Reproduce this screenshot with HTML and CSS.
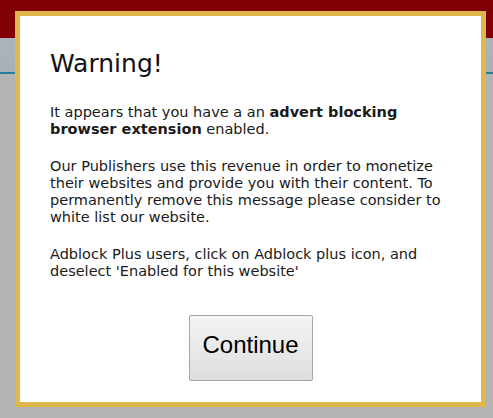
FILE: index.html
```html
<!DOCTYPE html>
<html lang="en">
<head>
  <meta charset="UTF-8" />
  <title>Warning</title>
  <link rel="stylesheet" href="styles.css">
</head>
<body>
  <div class="site-header"></div>
  <div class="site-nav"></div>
  <div class="site-page"></div>

  <div class="adblock-modal">
    <h2>Warning!</h2>
    <p>It appears that you have a an <strong>advert blocking browser extension</strong> enabled.</p>
    <p>Our Publishers use this revenue in order to monetize their websites and provide you with their content. To permanently remove this message please consider to white list our website.</p>
    <p>Adblock Plus users, click on Adblock plus icon, and deselect 'Enabled for this website'</p>
    <div class="modal-actions">
      <button class="continue-btn">Continue</button>
    </div>
  </div>
</body>
</html>
```

FILE: styles.css
```css
body {
  margin: 0;
  background-color: #b3b3b3;
  font-family: 'DejaVu Sans', Verdana, sans-serif;
  position: relative;
  height: 418px;
  overflow: hidden;
}

.site-header {
  height: 38px;
  background-color: #800006;
}

.site-nav {
  height: 34px;
  background: linear-gradient(#aab4ba, #a6b0b5);
  border-bottom: 2px solid #2b7c9c;
}

.site-page {
  height: 344px;
  background-color: #b3b3b3;
}

.adblock-modal {
  position: absolute;
  top: 11px;
  left: 15px;
  width: 401px;
  height: 386px;
  padding: 0 30px;
  background-color: #ffffff;
  border: 5px solid #dfb84b;
  color: #1a1a1a;
}

.adblock-modal h2 {
  font-size: 25px;
  font-weight: normal;
  margin: 33px 0 26px 0;
  color: #111;
}

.adblock-modal p {
  font-size: 14.5px;
  line-height: 17px;
  margin: 0 0 20px 0;
}

.modal-actions {
  text-align: center;
  margin-top: 35px;
}

.continue-btn {
  font-family: 'Liberation Sans', Arial, sans-serif;
  font-size: 24px;
  color: #000;
  width: 124px;
  height: 66px;
  padding: 0 0 6px 0;
  background: linear-gradient(#f4f4f4, #dedede);
  border: 1px solid #a5a5a5;
  border-radius: 2px;
}
```
